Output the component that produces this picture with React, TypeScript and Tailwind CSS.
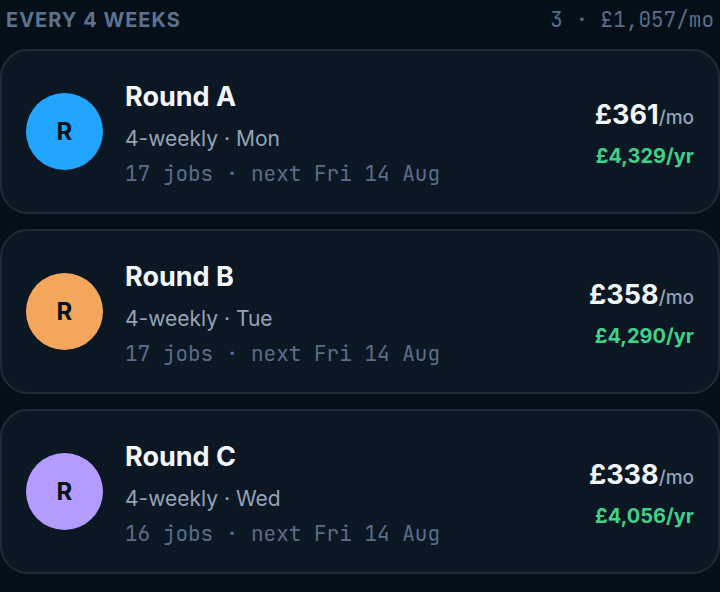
import React from 'react';

interface Round {
  name: string;
  day: string;
  jobs: number;
  monthly: string;
  yearly: string;
  color: string;
}

const rounds: Round[] = [
  { name: 'Round A', day: 'Mon', jobs: 17, monthly: '£361', yearly: '£4,329', color: 'bg-[#21a5ff]' },
  { name: 'Round B', day: 'Tue', jobs: 17, monthly: '£358', yearly: '£4,290', color: 'bg-[#f4a65c]' },
  { name: 'Round C', day: 'Wed', jobs: 16, monthly: '£338', yearly: '£4,056', color: 'bg-[#b49cff]' },
];

const RoundCard: React.FC<{ round: Round }> = ({ round }) => (
  <li className="flex items-center rounded-[28px] border-2 border-[#1e2a36] bg-[#0b1723] p-6">
    <div className={`flex size-[77px] shrink-0 items-center justify-center rounded-full text-2xl font-bold text-[#07111c] ${round.color}`}>
      R
    </div>
    <div className="ml-[22px] min-w-0 flex-1">
      <h3 className="text-[27px] leading-[43px] font-bold text-[#f3f7fb]">{round.name}</h3>
      <p className="text-[21px] leading-[42px] text-[#94a3b8]">4-weekly · {round.day}</p>
      <p className="font-['JetBrains_Mono','Liberation_Mono',monospace] text-[21px] leading-7 text-[#5a6d8a]">
        {round.jobs} jobs · next Fri 14 Aug
      </p>
    </div>
    <div className="pt-2 text-right">
      <p className="text-[27px] leading-[38px] font-bold text-[#f3f7fb]">
        {round.monthly}
        <span className="text-[19px] font-medium text-[#94a3b8]">/mo</span>
      </p>
      <p className="text-xl leading-[38px] font-bold text-[#40d088]">{round.yearly}/yr</p>
    </div>
  </li>
);

const App: React.FC = () => {
  return (
    <main className="min-h-screen bg-[#050f18] font-['Inter',sans-serif]">
      <header className="flex items-center justify-between px-[6px] pt-1 pb-[13px]">
        <h2 className="text-xl leading-8 font-bold tracking-wider text-[#5c7291]">EVERY 4 WEEKS</h2>
        <span className="font-['JetBrains_Mono','Liberation_Mono',monospace] text-[21px] leading-8 text-[#5a6d8a]">3 · £1,057/mo</span>
      </header>
      <ul className="flex flex-col gap-[15px]">
        {rounds.map((round) => (
          <RoundCard key={round.name} round={round} />
        ))}
      </ul>
    </main>
  );
};

export default App;
